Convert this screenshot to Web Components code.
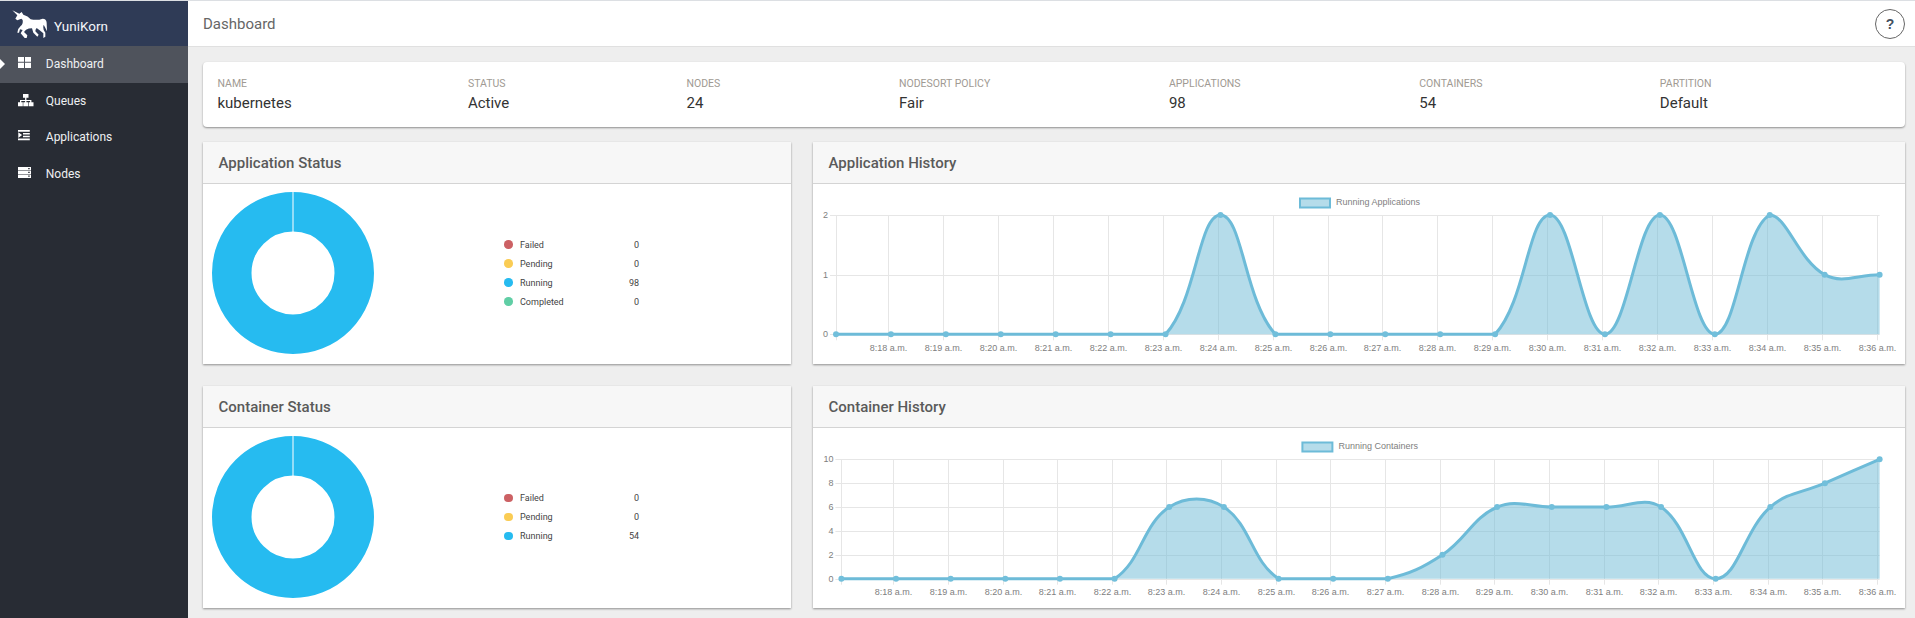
<!DOCTYPE html>
<html>
<head>
<meta charset="utf-8">
<title>YuniKorn</title>
<style>
  html, body { margin: 0; height: 618px; overflow: hidden; background: #eee; font-family: Roboto, "Liberation Sans", sans-serif; }
</style>
</head>
<body>
<yk-app>
  <yk-sidebar slot="side">
    <yk-nav-item icon="dashboard" active>Dashboard</yk-nav-item>
    <yk-nav-item icon="queues">Queues</yk-nav-item>
    <yk-nav-item icon="apps">Applications</yk-nav-item>
    <yk-nav-item icon="nodes">Nodes</yk-nav-item>
  </yk-sidebar>
  <yk-toolbar slot="top">Dashboard</yk-toolbar>

  <yk-info-card>
    <yk-info-item label="Name" value="kubernetes"></yk-info-item>
    <yk-info-item label="Status" value="Active"></yk-info-item>
    <yk-info-item label="Nodes" value="24"></yk-info-item>
    <yk-info-item label="Nodesort Policy" value="Fair"></yk-info-item>
    <yk-info-item label="Applications" value="98"></yk-info-item>
    <yk-info-item label="Containers" value="54"></yk-info-item>
    <yk-info-item label="Partition" value="Default"></yk-info-item>
  </yk-info-card>

  <yk-grid>
    <yk-card heading="Application Status">
      <yk-donut>
        <yk-legend-row color="#cc6164" label="Failed" value="0"></yk-legend-row>
        <yk-legend-row color="#facc54" label="Pending" value="0"></yk-legend-row>
        <yk-legend-row color="#26bbf0" label="Running" value="98"></yk-legend-row>
        <yk-legend-row color="#60cea5" label="Completed" value="0"></yk-legend-row>
      </yk-donut>
    </yk-card>
    <yk-card heading="Application History">
      <yk-line-chart legend="Running Applications" legend-x="486" left="23" top="31" bottom="150.3" step="1"
        values="0,0,0,0,0,0,0,2,0,0,0,0,0,2,0,2,0,2,1,1"></yk-line-chart>
    </yk-card>
    <yk-card heading="Container Status">
      <yk-donut>
        <yk-legend-row color="#cc6164" label="Failed" value="0"></yk-legend-row>
        <yk-legend-row color="#facc54" label="Pending" value="0"></yk-legend-row>
        <yk-legend-row color="#26bbf0" label="Running" value="54"></yk-legend-row>
      </yk-donut>
    </yk-card>
    <yk-card heading="Container History">
      <yk-line-chart legend="Running Containers" legend-x="488.4" left="28.4" top="31.3" bottom="150.7" step="2"
        values="0,0,0,0,0,0,6,6,0,0,0,2,6,6,6,6,0,6,8,10"></yk-line-chart>
    </yk-card>
  </yk-grid>
</yk-app>

<script>
const NAV_ICONS = {
  dashboard: `<path d="M0 0h6v4.8H0zM7 0h6v4.8H7zM0 5.8h6V11H0zM7 5.8h6V11H7z"/>`,
  queues: `<path d="M5 0h5.5v3.8H5zM7.1 3.8h1.3v2.2h5v2.2h-1.3V7.1H8.4v1.1H7.1V7.1H3.3v1.1H2V6h5.1zM0 8.2h4.8v4.1H0zM5.3 8.2h4.8v4.1H5.3zM10.7 8.2h4.8v4.1h-4.8z"/>`,
  apps: `<path d="M0 0h11.8v1.8H0zM5 2.9h6.8v1.6H5zM5 5.7h6.8v1.6H5zM0 8.4h11.8v1.8H0zM.3 2.2l3.8 2.9L.3 8z"/>`,
  nodes: `<path fill-rule="evenodd" d="M0 0h13v3.3H0zM0 3.8h13v3.3H0zM0 7.6h13v3.3H0zM10.2 1v1.2h1.5V1zM10.2 4.8V6h1.5V4.8zM10.2 8.6v1.2h1.5V8.6z"/>`,
};

class YkApp extends HTMLElement {
  constructor() {
    super();
    this.attachShadow({ mode: "open" }).innerHTML = `
    <style>
      :host { display: grid; grid-template-columns: 188px 1fr; grid-template-rows: 46px 1fr; height: 618px; }
      .side { grid-row: 1 / 3; }
      .content { display: flex; flex-direction: column; gap: 15px; padding: 16px 10px 0 15px; }
    </style>
    <div class="side"><slot name="side"></slot></div>
    <div class="top"><slot name="top"></slot></div>
    <div class="content"><slot></slot></div>`;
  }
}

class YkGrid extends HTMLElement {
  constructor() {
    super();
    this.attachShadow({ mode: "open" }).innerHTML = `
    <style>
      :host { display: grid; grid-template-columns: 588px 1092px; grid-auto-rows: 222px; gap: 22px; }
    </style>
    <slot></slot>`;
  }
}

class YkSidebar extends HTMLElement {
  constructor() {
    super();
    this.attachShadow({ mode: "open" }).innerHTML = `
    <style>
      :host { display: block; height: 100%; background: #282c34; color: #fff; }
      .brand { height: 46px; background: #2f3b56; border-top: 1px solid #dcdfe3; display: flex; align-items: center; box-sizing: border-box; padding: 2px 0 0 12px; gap: 6px; }
      .brand span { font-size: 13.5px; margin-top: 3px; color: #f4f6fa; }
      svg { display: block; width: 36px; height: 30px; }
    </style>
    <div class="brand">
      <svg viewBox="36 32 108 90" aria-hidden="true"><path fill="#fff" d="M37 33 L58 43 L65 38 L70 46 Q84 50 92 60 Q112 64 128 58 Q139 58 140 70 L141 96 L135 84 L131 76 Q128 84 131 92 L136 100 L136 112 L130 116 L130 102 L118 92 L110 86 Q106 90 106 96 L116 106 L112 112 L100 100 L96 87 Q86 87 78 91 L72 98 L82 108 L80 116 L74 116 L62 102 L68 92 L60 90 L57 100 L52 100 Q54 86 62 80 Q70 74 68 62 L64 58 L52 63 L46 58 L52 48 Z"/></svg>
      <span>YuniKorn</span>
    </div>
    <slot></slot>`;
  }
}

class YkNavItem extends HTMLElement {
  connectedCallback() {
    if (this.shadowRoot) return;
    const active = this.hasAttribute("active");
    const icon = this.getAttribute("icon");
    this.attachShadow({ mode: "open" }).innerHTML = `
    <style>
      :host { display: flex; align-items: center; height: 36.7px; position: relative; font-size: 12px; line-height: 14px; color: #eef0f2; background: ${active ? "#4f535c" : "transparent"}; }
      .ico { width: 27.5px; margin: -1.5px 0 0 18.3px; display: flex; }
      svg { display: block; fill: #fff; }
      .arrow { position: absolute; left: 0; top: 13px; width: 5px; height: 10px; }
      .txt { margin-top: -1px; }
    </style>
    ${active ? `<svg class="arrow" viewBox="0 0 5 10"><path d="M0 0l5 5-5 5z"/></svg>` : ""}
    <span class="ico"><svg width="16" height="13" viewBox="0 0 16 13">${NAV_ICONS[icon]}</svg></span>
    <span class="txt"><slot></slot></span>`;
  }
}

class YkToolbar extends HTMLElement {
  constructor() {
    super();
    this.attachShadow({ mode: "open" }).innerHTML = `
    <style>
      :host { display: flex; align-items: center; justify-content: space-between; height: 47px; box-sizing: border-box; background: #fff; border-top: 1px solid #dcdfe3; border-bottom: 1px solid #e0e0e0; padding: 0 10px 0 15px; font-size: 15px; color: #666; }
      button { width: 30px; height: 30px; padding: 0; border: 1px solid #666; border-radius: 50%; background: #fff; color: #44505f; font: 700 14px "Liberation Sans", sans-serif; }
    </style>
    <span><slot></slot></span>
    <button>?</button>`;
  }
}

class YkInfoCard extends HTMLElement {
  constructor() {
    super();
    this.attachShadow({ mode: "open" }).innerHTML = `
    <style>
      :host { display: grid; grid-template-columns: 250.4px 218.6px 212.5px 269.9px 250.4px 240.6px 1fr; align-items: center; height: 65px; box-sizing: border-box; padding: 0 14.5px; background: #fff; border-radius: 4px; box-shadow: 0 1px 2px rgba(0,0,0,.4); }
    </style>
    <slot></slot>`;
  }
}

class YkInfoItem extends HTMLElement {
  connectedCallback() {
    if (this.shadowRoot) return;
    this.attachShadow({ mode: "open" }).innerHTML = `
    <style>
      :host { display: block; }
      .k { font-size: 10.5px; line-height: 14px; color: #a09a93; text-transform: uppercase; margin-bottom: 3px; }
      .v { font-size: 15px; line-height: 19px; color: #333; }
    </style>
    <div class="k">${this.getAttribute("label")}</div>
    <div class="v">${this.getAttribute("value")}</div>`;
  }
}

class YkCard extends HTMLElement {
  connectedCallback() {
    if (this.shadowRoot) return;
    this.attachShadow({ mode: "open" }).innerHTML = `
    <style>
      :host { display: flex; flex-direction: column; height: 222px; background: #fff; box-shadow: 0 1px 2px rgba(0,0,0,.4); }
      h3 { margin: 0; height: 42px; box-sizing: border-box; display: flex; align-items: center; padding-left: 15.5px; background: #f7f7f7; border-bottom: 1px solid #d4d4d4; font-size: 15px; font-weight: 500; color: #5a5a5a; }
      .body { flex: 1; min-height: 0; }
    </style>
    <h3>${this.getAttribute("heading")}</h3>
    <div class="body"><slot></slot></div>`;
  }
}

class YkDonut extends HTMLElement {
  constructor() {
    super();
    this.attachShadow({ mode: "open" }).innerHTML = `
    <style>
      :host { display: flex; padding: 8px 0 0 8.5px; }
      svg { display: block; flex: none; }
      .legend { margin-left: 130.5px; width: 135px; height: 162px; display: flex; flex-direction: column; justify-content: center; }
    </style>
    <svg width="162" height="162" viewBox="0 0 162 162">
      <circle cx="81" cy="81" r="61.25" fill="none" stroke="#26bbf0" stroke-width="39.5"/>
      <line x1="81" y1="0" x2="81" y2="41" stroke="#fff" stroke-width="1"/>
    </svg>
    <div class="legend"><slot></slot></div>`;
  }
}

class YkLegendRow extends HTMLElement {
  connectedCallback() {
    if (this.shadowRoot) return;
    this.attachShadow({ mode: "open" }).innerHTML = `
    <style>
      :host { display: flex; align-items: center; height: 19px; font-size: 9px; color: #444; }
      i { width: 8.5px; height: 8.5px; border-radius: 50%; margin-right: 7.5px; background: ${this.getAttribute("color")}; }
      .v { margin-left: auto; }
    </style>
    <i></i><span>${this.getAttribute("label")}</span><span class="v">${this.getAttribute("value")}</span>`;
  }
}

// same spline as a chart.js line with tension 0.4, capped to the plot area
function splinePath(pts, top, bottom) {
  const cps = pts.map((p, i) => {
    const prev = pts[i - 1] || p, next = pts[i + 1] || p;
    const d01 = Math.hypot(p.x - prev.x, p.y - prev.y);
    const d12 = Math.hypot(next.x - p.x, next.y - p.y);
    const sum = d01 + d12 || 1;
    const fa = 0.4 * d01 / sum, fb = 0.4 * d12 / sum;
    const cap = y => Math.min(bottom, Math.max(top, y));
    return {
      px: p.x - fa * (next.x - prev.x), py: cap(p.y - fa * (next.y - prev.y)),
      nx: p.x + fb * (next.x - prev.x), ny: cap(p.y + fb * (next.y - prev.y)),
    };
  });
  let d = `M${pts[0].x} ${pts[0].y}`;
  for (let i = 1; i < pts.length; i++) {
    d += `C${cps[i - 1].nx} ${cps[i - 1].ny} ${cps[i].px} ${cps[i].py} ${pts[i].x} ${pts[i].y}`;
  }
  return d;
}

class YkLineChart extends HTMLElement {
  connectedCallback() {
    if (this.shadowRoot) return;
    const num = n => parseFloat(this.getAttribute(n));
    const values = this.getAttribute("values").split(",").map(Number);
    const left = num("left"), top = num("top"), bottom = num("bottom"), step = num("step"), right = 1066.6;
    const max = Math.max(...values);
    const pitch = (right - left) / (values.length - 1);
    const yOf = v => bottom - (bottom - top) * v / max;
    const pts = values.map((v, i) => ({ x: left + pitch * i, y: yOf(v) }));
    const line = splinePath(pts, top, bottom);
    const GRID = "#e6e6e6";

    let grid = "";
    for (let v = 0; v <= max; v += step) {
      const y = Math.round(yOf(v)) + 0.5;
      grid += `<line x1="${left - 6}" x2="${right}" y1="${y}" y2="${y}" stroke="${GRID}"/>`;
      grid += `<text x="${left - 8}" y="${y + 2.5}" text-anchor="end">${v}</text>`;
    }
    values.forEach((_, i) => {
      const x = Math.floor(i ? left + pitch * i - 2.3 : left) + 0.5;
      grid += `<line x1="${x}" x2="${x}" y1="${top}" y2="${bottom + 6}" stroke="${GRID}"/>`;
      if (i) grid += `<text x="${x}" y="167" text-anchor="middle">8:${17 + i} a.m.</text>`;
    });

    const lx = num("legend-x");
    this.attachShadow({ mode: "open" }).innerHTML = `
    <style>
      :host { display: block; height: 180px; }
      svg { display: block; }
      text { font: 9px "Liberation Sans", Arial, sans-serif; fill: #808080; }
    </style>
    <svg width="1092" height="180" viewBox="0 0 1092 180">
      <rect x="${lx + 1}" y="14.5" width="30" height="9" fill="#b5dcea" stroke="#6dbbd8" stroke-width="2"/>
      <text x="${lx + 37}" y="21">${this.getAttribute("legend")}</text>
      ${grid}
      <path d="${line}L${right} ${bottom}L${left} ${bottom}Z" fill="rgba(108,185,214,.5)"/>
      <path d="${line}" fill="none" stroke="#6dbbd8" stroke-width="3"/>
      ${pts.map(p => `<circle cx="${p.x}" cy="${p.y}" r="3" fill="#72bfdb"/>`).join("")}
    </svg>`;
  }
}

customElements.define("yk-app", YkApp);
customElements.define("yk-grid", YkGrid);
customElements.define("yk-sidebar", YkSidebar);
customElements.define("yk-nav-item", YkNavItem);
customElements.define("yk-toolbar", YkToolbar);
customElements.define("yk-info-card", YkInfoCard);
customElements.define("yk-info-item", YkInfoItem);
customElements.define("yk-card", YkCard);
customElements.define("yk-donut", YkDonut);
customElements.define("yk-legend-row", YkLegendRow);
customElements.define("yk-line-chart", YkLineChart);
</script>
</body>
</html>
